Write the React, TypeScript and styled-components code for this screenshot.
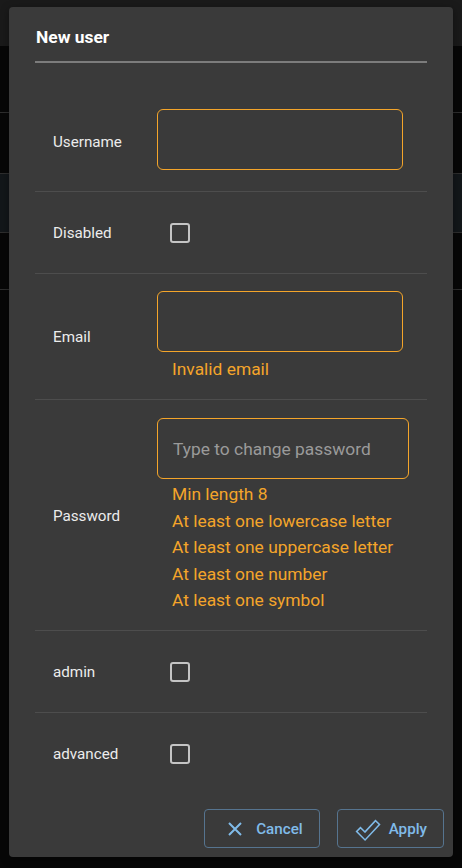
import React from "react";
import styled, { createGlobalStyle } from "styled-components";

const Global = createGlobalStyle`
  html, body { margin: 0; padding: 0; background: #070707; }
  body { font-family: Roboto, "Noto Sans", sans-serif; }
  * { box-sizing: border-box; }
`;

const Page = styled.div`
  position: relative;
  width: 462px;
  height: 868px;
  overflow: hidden;
  background: #070707;
`;

const TopBar = styled.div`
  height: 46px;
  background: #1a1a1a;
`;

const BackRow = styled.div<{ $h: number; $hl?: boolean }>`
  height: ${(p) => p.$h}px;
  border-bottom: 1px solid #2e2e2e;
  background: ${(p) => (p.$hl ? "#13171a" : "transparent")};
`;

const Dialog = styled.div`
  position: absolute;
  left: 9px;
  top: 7px;
  width: 444px;
  background: #3a3a3a;
  border-radius: 4px;
  display: flex;
  flex-direction: column;
  box-shadow: 0 2px 8px rgba(0, 0, 0, 0.4);
`;

const Title = styled.h2`
  margin: 0 26px;
  padding: 21px 0 14px 1px;
  font-size: 17.4px;
  line-height: 19px;
  font-weight: 700;
  color: #ffffff;
  border-bottom: 2px solid #7c7c7c;
`;

const Form = styled.div`
  padding: 25px 26px 0;
  display: flex;
  flex-direction: column;
`;

const Row = styled.div<{ $pt: number; $pb: number; $last?: boolean }>`
  display: grid;
  grid-template-columns: 104px 1fr;
  align-items: center;
  padding: ${(p) => p.$pt}px 0 ${(p) => p.$pb}px 18px;
  border-bottom: ${(p) => (p.$last ? "none" : "1px solid #4d4d4d")};
`;

const Label = styled.label<{ $drop?: number }>`
  font-size: 15.2px;
  line-height: 18px;
  color: #ececec;
  padding-top: ${(p) => p.$drop ?? 0}px;
`;

const Field = styled.div`
  display: flex;
  flex-direction: column;
`;

const Input = styled.input<{ $w: number }>`
  width: ${(p) => p.$w}px;
  height: 61px;
  border: 1px solid #f4a52a;
  border-radius: 6px;
  background: transparent;
  padding: 0 15px;
  font-family: Roboto, sans-serif;
  font-size: 17.4px;
  color: #eeeeee;
  outline: none;
  &::placeholder {
    color: #9a9a9a;
  }
`;

const Errors = styled.div<{ $mt: number }>`
  margin-top: ${(p) => p.$mt}px;
  padding-left: 15px;
  display: flex;
  flex-direction: column;
`;

const ErrorText = styled.span`
  font-size: 17.4px;
  line-height: 26.5px;
  color: #f4a52a;
`;

const CheckCell = styled.div`
  height: 41px;
  display: flex;
  align-items: center;
`;

const Checkbox = styled.span`
  display: block;
  width: 20px;
  height: 20px;
  margin-left: 13px;
  border: 2px solid #c4c4c4;
  border-radius: 3px;
`;

const Footer = styled.div`
  display: flex;
  justify-content: flex-end;
  gap: 17px;
  padding: 15px 9px 9px;
`;

const Button = styled.button`
  height: 39px;
  display: inline-flex;
  align-items: center;
  gap: 8px;
  padding: 0 16px 0 17px;
  background: transparent;
  border: 1px solid #56748f;
  border-radius: 4px;
  color: #80bbe9;
  font-family: Roboto, sans-serif;
  font-size: 15.2px;
  font-weight: 500;
  cursor: pointer;
`;

const IconBox = styled.span`
  width: 26px;
  display: flex;
  align-items: center;
  justify-content: center;
`;

const CloseIcon = () => (
  <svg width="14" height="14" viewBox="0 0 14 14">
    <path d="M1 1 L13 13 M13 1 L1 13" stroke="#80bbe9" strokeWidth="2" fill="none" />
  </svg>
);

const CheckIcon = () => (
  <svg width="26" height="24" viewBox="0 0 26 24" style={{ overflow: "visible" }}>
    <path
      d="M3 12 L10 19 L23 5"
      stroke="#80bbe9"
      strokeWidth="7"
      strokeLinejoin="miter"
      strokeLinecap="butt"
      fill="none"
    />
    <path
      d="M4.1 13.1 L10 19 L22 6.1"
      stroke="#3a3a3a"
      strokeWidth="4"
      strokeLinejoin="miter"
      strokeLinecap="butt"
      fill="none"
    />
  </svg>
);

const passwordErrors = [
  "Min length 8",
  "At least one lowercase letter",
  "At least one uppercase letter",
  "At least one number",
  "At least one symbol",
];

export default function App() {
  return (
    <>
      <Global />
      <Page>
        <TopBar />
        <BackRow $h={67} />
        <BackRow $h={61} />
        <BackRow $h={59} $hl />
        <BackRow $h={57} />
        <Dialog>
          <Title>New user</Title>
          <Form>
            <Row $pt={21} $pb={21}>
              <Label $drop={4}>Username</Label>
              <Field>
                <Input $w={246} />
              </Field>
            </Row>
            <Row $pt={20} $pb={20}>
              <Label>Disabled</Label>
              <CheckCell>
                <Checkbox />
              </CheckCell>
            </Row>
            <Row $pt={17} $pb={17}>
              <Label>Email</Label>
              <Field>
                <Input $w={246} />
                <Errors $mt={3.5}>
                  <ErrorText>Invalid email</ErrorText>
                </Errors>
              </Field>
            </Row>
            <Row $pt={18} $pb={16.5}>
              <Label>Password</Label>
              <Field>
                <Input $w={252} placeholder="Type to change password" />
                <Errors $mt={2}>
                  {passwordErrors.map((e) => (
                    <ErrorText key={e}>{e}</ErrorText>
                  ))}
                </Errors>
              </Field>
            </Row>
            <Row $pt={20} $pb={20}>
              <Label>admin</Label>
              <CheckCell>
                <Checkbox />
              </CheckCell>
            </Row>
            <Row $pt={20} $pb={20} $last>
              <Label>advanced</Label>
              <CheckCell>
                <Checkbox />
              </CheckCell>
            </Row>
          </Form>
          <Footer>
            <Button>
              <IconBox>
                <CloseIcon />
              </IconBox>
              Cancel
            </Button>
            <Button>
              <IconBox>
                <CheckIcon />
              </IconBox>
              Apply
            </Button>
          </Footer>
        </Dialog>
      </Page>
    </>
  );
}
